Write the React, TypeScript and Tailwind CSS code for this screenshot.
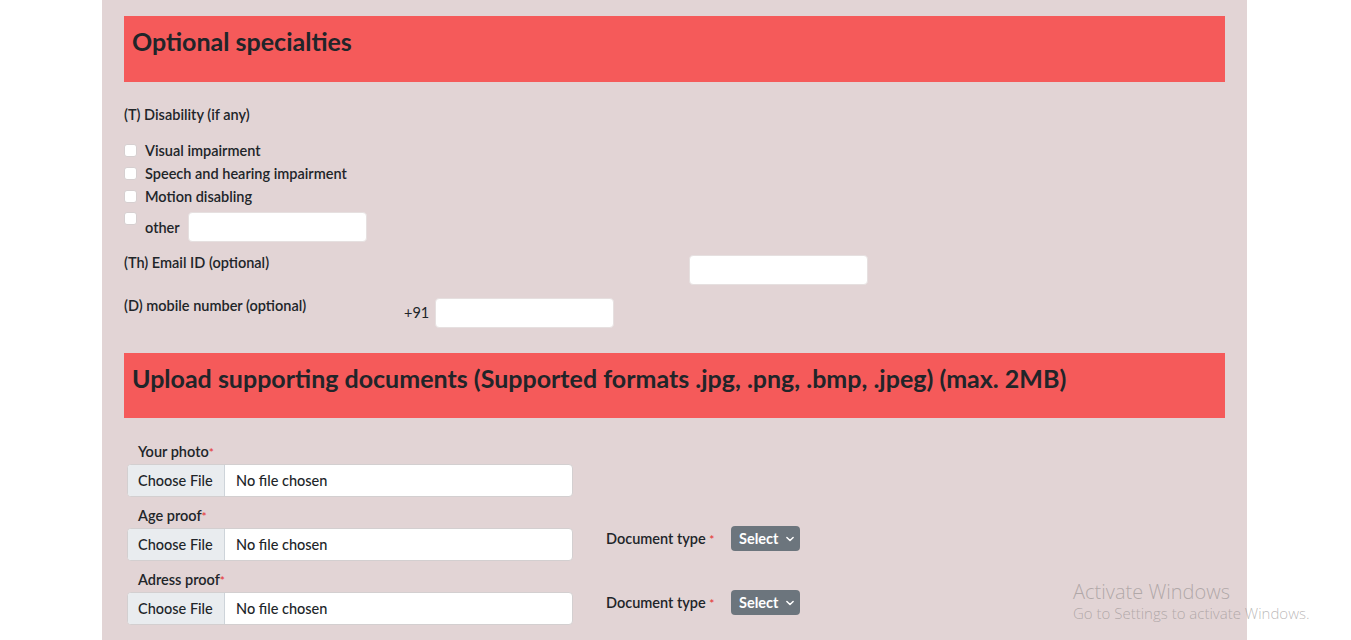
import React from "react";

const font = { fontFamily: "Lato, 'Liberation Sans', sans-serif" };

function Check({ label }: { label: string }) {
  return (
    <label className="flex items-center h-[23px] gap-2">
      <input
        type="checkbox"
        className="appearance-none w-[13px] h-[13px] bg-white rounded-[3px] border border-[#d6cfd0] shrink-0"
      />
      <span className="text-[14.5px] font-semibold text-[#212529]">{label}</span>
    </label>
  );
}

function FileField({ label }: { label: string }) {
  return (
    <div className="flex flex-col">
      <div className="h-[31px] flex items-end pb-[2px] pl-[11px]">
        <span className="text-[14.5px] font-semibold text-[#212529] leading-[18px]">
          {label}
          <span className="text-[#e53e3e] text-[12px]">*</span>
        </span>
      </div>
      <div className="flex w-[446px] h-[33px] bg-white border border-[#d3cfd0] rounded-[4px] overflow-hidden">
        <div className="w-[97px] bg-[#e9ecef] border-r border-[#ced4da] flex items-center pl-[10px] text-[14.5px] font-medium text-[#212529]">
          Choose File
        </div>
        <div className="flex items-center pl-[11px] text-[14.5px] font-medium text-[#212529]">
          No file chosen
        </div>
      </div>
    </div>
  );
}

function DocType() {
  return (
    <div className="flex items-center mb-[10px]">
      <span className="text-[14.5px] font-semibold text-[#212529] w-[125px]">
        Document type <span className="text-[#e53e3e] text-[12px]">*</span>
      </span>
      <button className="flex items-center gap-[7px] bg-[#6c757d] rounded-[4px] h-[25px] w-[69px] pl-[8px] text-white text-[14.5px] font-bold">
        Select
        <svg width="10" height="10" viewBox="0 0 16 16" fill="none" stroke="white" strokeWidth="2.4" strokeLinecap="round" strokeLinejoin="round">
          <path d="M3 5.5l5 5 5-5" />
        </svg>
      </button>
    </div>
  );
}

export default function App() {
  return (
    <div className="relative bg-white min-h-screen h-[640px] overflow-hidden" style={font}>
      <div className="ml-[102px] w-[1145px] h-full bg-[#e2d4d5] px-[22px] pt-4">
        <div className="h-[66px] bg-[#f55a5a] px-2 pt-[10px]">
          <h2 className="text-[25px] leading-[1.2] font-bold text-[#212529]">Optional specialties</h2>
        </div>

        <div className="mt-[24px] h-[18px] flex items-center text-[14.5px] font-semibold text-[#212529]">
          (T) Disability (if any)
        </div>

        <div className="mt-[15px] flex flex-col">
          <Check label="Visual impairment" />
          <Check label="Speech and hearing impairment" />
          <Check label="Motion disabling" />
          <div className="flex items-start gap-2 mt-[4px]">
            <input
              type="checkbox"
              className="appearance-none w-[13px] h-[13px] bg-white rounded-[3px] border border-[#d6cfd0] shrink-0"
            />
            <span className="mt-[5px] text-[14.5px] font-semibold text-[#212529]">other</span>
            <input className="w-[179px] h-[30px] bg-white rounded-[4px] border border-[#e6e0e0] outline-none" />
          </div>
        </div>

        <div className="flex mt-[13px] h-[30px]">
          <div className="w-[565px] text-[14.5px] font-semibold text-[#212529] leading-[16px]">
            (Th) Email ID (optional)
          </div>
          <input className="w-[179px] h-[30px] bg-white rounded-[4px] border border-[#e6e0e0] outline-none" />
        </div>

        <div className="flex mt-[13px] h-[30px]">
          <div className="w-[280px] text-[14.5px] font-semibold text-[#212529] leading-[16px]">
            (D) mobile number (optional)
          </div>
          <span className="text-[14.5px] text-[#212529] self-center mr-[6px]">+91</span>
          <input className="w-[179px] h-[30px] bg-white rounded-[4px] border border-[#e6e0e0] outline-none" />
        </div>

        <div className="mt-[25px] h-[65px] bg-[#f55a5a] px-2 pt-[10px]">
          <h2 className="text-[25px] leading-[1.2] font-bold text-[#212529]">
            Upload supporting documents (Supported formats .jpg, .png, .bmp, .jpeg) (max. 2MB)
          </h2>
        </div>

        <div className="mt-[15px] pl-[3px] flex flex-col">
          <FileField label="Your photo" />
          <div className="flex items-end gap-[33px]">
            <FileField label="Age proof" />
            <DocType />
          </div>
          <div className="flex items-end gap-[33px]">
            <FileField label="Adress proof" />
            <DocType />
          </div>
        </div>
      </div>

      <div
        className="absolute left-[1073px] top-[579px] text-[#8f8a8a]/60 leading-tight pointer-events-none"
        style={{ fontFamily: "'Open Sans', 'Noto Sans', sans-serif" }}
      >
        <div className="text-[20px] font-light">Activate Windows</div>
        <div className="text-[15px] font-light">Go to Settings to activate Windows.</div>
      </div>
    </div>
  );
}
